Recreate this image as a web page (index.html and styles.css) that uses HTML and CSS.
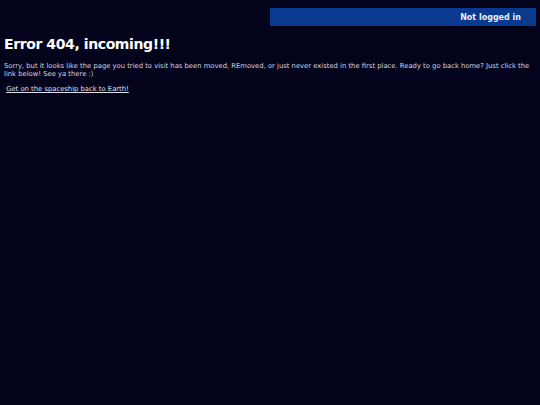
FILE: index.html
```html
<!DOCTYPE html>
<html lang="en">
<head>
    <meta charset="UTF-8">
    <title>Error 404</title>
    <link rel="stylesheet" href="styles.css">
</head>
<body>
    <div class="topbar">
        <div class="login-status">Not logged in</div>
    </div>
    <div class="content">
        <h1>Error 404, incoming!!!</h1>
        <p>Sorry, but it looks like the page you tried to visit has been moved, REmoved, or just never existed in the first place. Ready to go back home? Just click the link below! See ya there :)</p>
        <p class="back">&nbsp;<a href="/">Get on the spaceship back to Earth!</a></p>
    </div>
</body>
</html>
```

FILE: styles.css
```css
body {
    font-family: Verdana, "DejaVu Sans", sans-serif;
    background-color: #03031c;
    color: #d8d8e0;
    margin: 0;
    padding: 8px 4px;
}

.topbar {
    display: flex;
    justify-content: flex-end;
}

.login-status {
    width: 266px;
    height: 18px;
    line-height: 20px;
    box-sizing: border-box;
    padding-right: 15px;
    background-color: #0a3a8f;
    color: #e8ecf4;
    font-size: 8px;
    font-weight: bold;
    text-align: right;
}

.content h1 {
    font-size: 14px;
    letter-spacing: -0.4px;
    color: #ffffff;
    margin: 10px 0 10px;
}

.content p {
    font-size: 6.8px;
    line-height: 8px;
    margin: 0 0 7px;
}

.content a {
    color: #e0e0e8;
}
```
